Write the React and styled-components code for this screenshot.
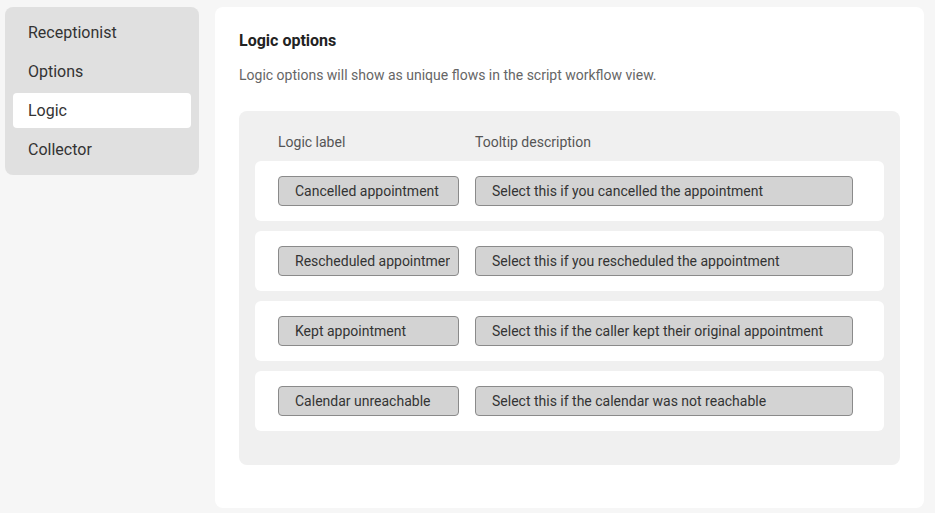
import React from "react";
import styled, { createGlobalStyle } from "styled-components";

const Global = createGlobalStyle`
  html, body { margin: 0; padding: 0; background: #f6f6f6; }
  * { box-sizing: border-box; }
  body { font-family: Roboto, "Noto Sans", Arial, sans-serif; color: #333; }
`;

const Page = styled.div`
  display: flex;
  gap: 16px;
  align-items: flex-start;
  height: 100vh;
  padding: 7px 11px 5px 5px;
`;

const Sidebar = styled.nav`
  width: 194px;
  flex: none;
  background: #e0e0e0;
  border-radius: 8px;
  padding: 8px;
  display: flex;
  flex-direction: column;
  gap: 4px;
`;

const NavItem = styled.div`
  height: 35px;
  display: flex;
  align-items: center;
  padding: 0 15px;
  font-size: 16px;
  color: #333;
  border-radius: 4px;
  background: ${(p) => (p.$active ? "#ffffff" : "transparent")};
`;

const Main = styled.main`
  flex: 1;
  align-self: stretch;
  background: #fff;
  border-radius: 8px;
  padding: 24px 24px;
`;

const Title = styled.h2`
  margin: 0;
  font-size: 16px;
  line-height: 20px;
  font-weight: 700;
  color: #222;
`;

const Desc = styled.p`
  margin: 14px 0 26px;
  font-size: 14px;
  line-height: 20px;
  color: #666;
`;

const OptionsBox = styled.div`
  background: #f0f0f0;
  border-radius: 8px;
  padding: 21px 16px 34px;
`;

const HeaderRow = styled.div`
  display: grid;
  grid-template-columns: 181px 378px;
  column-gap: 16px;
  padding: 0 23px;
  margin-bottom: 9px;
  font-size: 14px;
  line-height: 20px;
  color: #555;
`;

const Rows = styled.div`
  display: flex;
  flex-direction: column;
  gap: 10px;
`;

const Row = styled.div`
  height: 60px;
  background: #fff;
  border-radius: 6px;
  padding: 0 23px;
  display: grid;
  grid-template-columns: 181px 378px;
  column-gap: 16px;
  align-items: center;
`;

const Field = styled.div`
  height: 30px;
  background: #d3d3d3;
  border: 1px solid #8a8a8a;
  border-radius: 4px;
  padding: 0 8px 0 16px;
  font-size: 14px;
  line-height: 28px;
  color: #333;
`;

const FieldText = styled.span`
  display: block;
  white-space: nowrap;
  overflow: hidden;
`;

const options = [
  ["Cancelled appointment", "Select this if you cancelled the appointment"],
  ["Rescheduled appointment", "Select this if you rescheduled the appointment"],
  ["Kept appointment", "Select this if the caller kept their original appointment"],
  ["Calendar unreachable", "Select this if the calendar was not reachable"],
];

export default function App() {
  return (
    <>
      <Global />
      <Page>
        <Sidebar>
          <NavItem>Receptionist</NavItem>
          <NavItem>Options</NavItem>
          <NavItem $active>Logic</NavItem>
          <NavItem>Collector</NavItem>
        </Sidebar>
        <Main>
          <Title>Logic options</Title>
          <Desc>Logic options will show as unique flows in the script workflow view.</Desc>
          <OptionsBox>
            <HeaderRow>
              <span>Logic label</span>
              <span>Tooltip description</span>
            </HeaderRow>
            <Rows>
              {options.map(([label, tip]) => (
                <Row key={label}>
                  <Field><FieldText>{label}</FieldText></Field>
                  <Field><FieldText>{tip}</FieldText></Field>
                </Row>
              ))}
            </Rows>
          </OptionsBox>
        </Main>
      </Page>
    </>
  );
}
